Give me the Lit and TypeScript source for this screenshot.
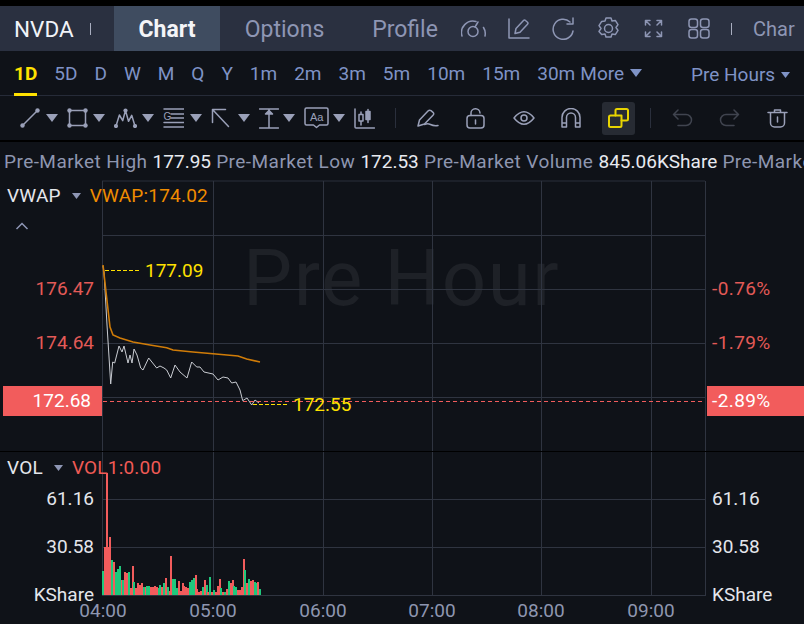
import { LitElement, css, html, svg } from "lit";
import { customElement } from "lit/decorators.js";

const PERIODS = ["5D", "D", "W", "M", "Q", "Y", "1m", "2m", "3m", "5m", "10m", "15m", "30m"];

const caret = (w = 12, h = 8) =>
  html`<svg class="caret" width=${w} height=${h} viewBox="0 0 12 8" preserveAspectRatio="none"><path d="M0 0h12L6 8z" fill="currentColor"/></svg>`;

const icon = (w: number, h: number, body: unknown, sw = 1.5) =>
  html`<svg class="icon" width=${w} height=${h} viewBox="0 0 ${w} ${h}" fill="none" stroke="currentColor" stroke-width=${sw} stroke-linejoin="round" stroke-linecap="round">${body}</svg>`;

const ICONS = {
  gauge: icon(25, 18, svg`<path d="M1 16A11.500 11.500 0 0 1 15 1.500M22.500 7.500a11.500 11.500 0 0 1 1.500 8.500"/><circle cx="12" cy="11.500" r="5"/><path d="m14 7 3-5"/>`),
  edit: icon(22, 21, svg`<path d="M1 1v19h20"/><path d="M7 15.500l1-5 7.500-8q1-1 2 0l2 1.700q1 1 0 2l-7.500 8z"/>`),
  refresh: icon(23, 23, svg`<path d="M18 5A10 10 0 1 0 21 14"/><path d="M21 1v6h-6"/>`),
  gear: icon(23, 23, svg`<path d="M9 1h5l1 3 3.300-.6 2.700 4.200-2 2.900 2 2.900-2.700 4.200-3.300-.6-1 3H9l-1-3-3.300.6L2 14.400l2-2.900-2-2.900 2.700-4.200L8 4z"/><circle cx="11.500" cy="11.500" r="4"/>`),
  expand: icon(19, 19, svg`<path d="M1.500 6V1.500H6M13 1.500h4.500V6M1.500 13v4.500H6M13 17.500h4.500V13M2 2l4 4M17 2l-4 4M2 17l4-4M17 17l-4-4"/>`),
  grid: icon(22, 21, svg`<rect x="1" y="1" width="8.500" height="8.500" rx="2.500"/><rect x="12.500" y="1" width="8.500" height="8.500" rx="2.500"/><rect x="1" y="11.500" width="8.500" height="8.500" rx="2.500"/><rect x="12.500" y="11.500" width="8.500" height="8.500" rx="2.500"/>`),

  line: icon(20, 20, svg`<path d="M2.500 17.500l15-15"/><g fill="currentColor" stroke="none"><circle cx="2.500" cy="17.500" r="2.200"/><circle cx="17.500" cy="2.500" r="2.200"/></g>`),
  rect: icon(21, 20, svg`<rect x="2.500" y="2.500" width="16" height="15"/><g fill="currentColor" stroke="none"><circle cx="2.500" cy="2.500" r="2.200"/><circle cx="18.500" cy="2.500" r="2.200"/><circle cx="2.500" cy="17.500" r="2.200"/><circle cx="18.500" cy="17.500" r="2.200"/></g>`),
  wave: icon(23, 20, svg`<path d="M2 18l3.400-11 3.300 5.700L11.500 2.500l3 10.800 3.200-6 3.300 10.700"/><g fill="currentColor" stroke="none"><circle cx="2" cy="18" r="2.100"/><circle cx="11.500" cy="2.500" r="2.100"/><circle cx="21" cy="18" r="2.100"/></g>`),
  fib: icon(21, 20, svg`<path d="M1 1h20M8 6h13M8 10h13M1 14.500h20M1 19h20"/><text x="0.500" y="12" font-size="10" fill="currentColor" stroke="none" font-family="Liberation Sans">G</text>`),
  arrow: icon(19, 20, svg`<path d="M1.500 1.500l16 17M1.500 1.500h13M1.500 1.500v13"/>`),
  measure: icon(20, 21, svg`<path d="M.5 1h19M.5 20h19M10 1v19"/><path d="M6.500 6 10 2.500 13.500 6z" fill="currentColor"/>`),
  note: icon(25, 22, svg`<path d="M2.500 1h20q1.500 0 1.500 1.500v14q0 1.500-1.500 1.500h-7l-3 2.500-3-2.500h-7Q1 18 1 16.500v-14Q1 1 2.500 1z"/><text x="6" y="14" font-size="11" fill="currentColor" stroke="none" font-family="Liberation Sans">Aa</text>`),
  candles: icon(21, 21, svg`<path d="M1 1v18q0 1 1 1h18.500M7 4v13M14 1.500v13"/><rect x="5" y="6.500" width="4" height="6.500" fill="#0f1218"/><rect x="12" y="3.500" width="4" height="8" fill="currentColor"/>`),

  pen: icon(22, 18, svg`<path d="M1 17l1.500-6L11 2q1.500-1.500 3-.3l2 1.600q1.500 1.500 0 3L7.500 15z"/><path d="M7.500 15.500c3-1.500 4-1 6 0s4 1.500 7.500 1"/>`),
  lock: icon(19, 21, svg`<rect x="1" y="7.500" width="17" height="12.500" rx="3"/><path d="M5 7.500V5.500a4.500 4.500 0 0 1 9-.5M9.500 12v4"/>`),
  eye: icon(22, 16, svg`<path d="M1 8Q11-4.500 21 8 11 20.500 1 8z"/><circle cx="11" cy="8" r="3"/>`),
  magnet: icon(20, 20, svg`<path d="M1 19V9.500a9 9 0 0 1 18 0V19h-4.500V9.500a4.500 4.500 0 0 0-9 0V19zM1 15h4.500M14.500 15H19"/>`),
  link: icon(21, 20, svg`<path d="M7.500 7.500v-5Q7.500 1 9 1h9.500Q20 1 20 2.500V11q0 1.500-1.500 1.500H13.500"/><path d="M13.500 7.500h-11Q1 7.500 1 9v8.500Q1 19 2.500 19H12q1.500 0 1.500-1.500z"/>`, 2),
  undo: icon(21, 18, svg`<path d="M6 1 1.500 5.500 6 10M1.500 5.500H14a5.500 5.500 0 0 1 0 11H6"/>`),
  redo: icon(21, 18, svg`<path d="m15 1 4.500 4.500L15 10M19.500 5.500H7a5.500 5.500 0 0 0 0 11h8"/>`),
  trash: icon(21, 19, svg`<path d="M1 3.500h19M7.500 3.500V1h6v2.500M3.500 3.500V14a4 4 0 0 0 4 4h6a4 4 0 0 0 4-4V3.500M10.500 8v5"/>`),
};

// drawing tools: slot width, icon, has a dropdown caret
const DRAW_TOOLS: [number, unknown, boolean][] = [
  [47, ICONS.line, true],
  [47, ICONS.rect, true],
  [49, ICONS.wave, true],
  [48, ICONS.fib, true],
  [48, ICONS.arrow, true],
  [45, ICONS.measure, true],
  [50, ICONS.note, true],
  [41, ICONS.candles, false],
];

// volume bars, green positive, red negative
const VOLUME = [
  24, -48, -122, -48, -58, 35, -33, 23, 26, 29, -15, 15, -23, -22, 23, -7, -29, 13, -7, -12, -10, -12, 8, -8, 9, 9, -8,
  -8, -9, -8, 7, 10, -8, 12, -17, 8, -4, -39, 16, 16, 7, -14, -4, -12, -9, -8, -7, 13, 15, 17, -20, -6, -3, -4, 8, -15,
  10, -3, 18, -3, 5, -3, -9, -16, 7, -3, 3, -6, 14, -12, -15, 9, 8, -5, -5, -8, -36, 25, -12, 16, -14, -15, 13, 12, -13,
  6,
];

const PRICE_LINE =
  "103,266 104,272 107,325 110.700,384 112.700,362 114.700,363 119,346 122,352 124,346 128,363 130,355 132,363 134,349 137,355 140.700,368 143,370 148.700,358 152.700,363 156.700,368 160,366 164,368 166.700,370 170.700,378 175,365 180,372 187,378 191.700,362 196.700,367 200,367 204,372 213,374 218,380 223,377 228,378 231.700,383 236,382 240,390 242.700,400.700 247,398 251.700,405 255,400 259,403";

const VWAP_LINE =
  "103,265 106.700,298 110,327 113,335 120,338 133,342 150,345 166.700,347.700 173,350 193,352 213,353.700 238,356 246.700,359 260,362";

@customElement("app-root")
export class AppRoot extends LitElement {
  static styles = css`
    :host {
      display: block;
      width: 804px;
      height: 624px;
      overflow: hidden;
      background: #0f1218;
      font-family: Roboto, "Noto Sans", sans-serif;
      color: #9aa3c0;
    }

    .strip {
      height: 6px;
      background: #000;
    }
    .top {
      display: flex;
      align-items: center;
      height: 45px;
      background: #2a3040;
      white-space: nowrap;
      overflow: hidden;
      color: #8e96b4;
    }
    .symbol {
      flex: none;
      box-sizing: border-box;
      width: 90px;
      padding-left: 14px;
      font-size: 22.5px;
      color: #f1f3f8;
    }
    .sep {
      width: 1px;
      height: 12px;
      background: #a9aec0;
      flex: none;
    }
    .tab {
      font-size: 23px;
      height: 100%;
      box-sizing: border-box;
      padding-top: 2px;
      display: flex;
      align-items: center;
      justify-content: center;
      flex: none;
    }
    .tab.on {
      width: 106px;
      margin-left: 23px;
      background: #3f4c60;
      color: #f4f5f8;
      font-weight: 700;
    }
    .tab.options {
      width: 129px;
    }
    .tab.profile {
      width: 88px;
      margin: 0 2px 0 12px;
    }
    .top-icons {
      display: flex;
      align-items: center;
    }
    .top-icons span {
      display: flex;
      justify-content: center;
      width: 45px;
    }
    .top .sep.last {
      margin-left: 10px;
    }
    .char {
      font-size: 20px;
      margin-left: 21px;
    }

    .periods {
      display: flex;
      align-items: center;
      height: 45px;
      border-bottom: 1px solid #262b38;
      color: #7f93c6;
      font-size: 19px;
      padding-left: 14px;
      position: relative;
      white-space: nowrap;
      box-sizing: border-box;
    }
    .periods span {
      margin-right: 17px;
    }
    .periods .active {
      color: #ffe100;
      font-weight: 700;
      position: relative;
    }
    .periods .active::after {
      content: "";
      position: absolute;
      left: 0;
      right: 0;
      bottom: -11px;
      height: 3px;
      background: #ffe100;
    }
    .periods .more {
      margin: 0 0 0 -12px;
      display: flex;
      align-items: center;
      gap: 6px;
    }
    .periods .hours {
      margin: 0;
      position: absolute;
      left: 691px;
      top: 12px;
      display: flex;
      align-items: center;
      gap: 6px;
    }

    .tools {
      display: flex;
      align-items: center;
      height: 46px;
      box-sizing: border-box;
      color: #9aa0b8;
      border-bottom: 2px solid #000;
      padding-left: 20px;
    }
    .slot {
      display: flex;
      align-items: center;
      flex: none;
      box-sizing: border-box;
    }
    .slot.drop {
      justify-content: space-between;
      padding-right: 9px;
    }
    .divider {
      width: 1px;
      height: 20px;
      background: #2a2f3c;
      flex: none;
    }
    .drawing-end {
      margin-right: 21px;
    }
    .linked {
      width: 33px;
      height: 33px;
      justify-content: center;
      border-radius: 3px;
      background: #272b33;
      color: #e8d400;
      margin-right: 15px;
    }
    .history {
      color: #40444f;
    }
    .history.first {
      margin-left: 21px;
    }

    .info {
      height: 38px;
      line-height: 40px;
      font-size: 19px;
      letter-spacing: 0.45px;
      padding-left: 4px;
      white-space: nowrap;
      overflow: hidden;
      color: #8e96b0;
    }
    .info b {
      font-weight: 400;
      letter-spacing: 0;
      color: #e8eaf0;
    }

    .chart {
      position: relative;
      height: 444px;
    }
    .plot {
      position: absolute;
      inset: 0;
      display: block;
    }
    .plot text {
      font-size: 19px;
    }
    .plot .wm {
      font-size: 78px;
      fill: #1e2127;
      letter-spacing: 1.5px;
    }
    .plot .pct {
      letter-spacing: 0.4px;
    }
    .legend {
      position: absolute;
      left: 7px;
      display: flex;
      align-items: center;
      font-size: 19px;
      letter-spacing: 0.2px;
      color: #e4e6ec;
      white-space: nowrap;
    }
    .legend.price {
      top: 4px;
    }
    .legend.volume {
      top: 276px;
    }
    .legend .caret {
      color: #8e96b4;
      margin: 0 9px 0 11px;
    }
    .legend .vwap {
      color: #f08c00;
    }
    .legend .vol {
      color: #f05a55;
    }
    .chev {
      position: absolute;
      left: 15px;
      top: 41px;
    }
  `;

  private chart() {
    const hs = [235, 289, 343, 397, 499, 547, 595];
    const vs = [102, 213, 323, 432, 541, 651, 705];
    return html`<svg class="plot" width="804" height="444" viewBox="0 180 804 444">
        <text class="wm" x="243" y="305">Pre Hour</text>
        <line x1="102" x2="705" y1="181" y2="181" stroke="#2a2f3a" />
        ${hs.map((h) => svg`<line x1="102" x2="705" y1=${h + 0.5} y2=${h + 0.5} stroke="#2f3440"/>`)}
        ${vs.map((v) => svg`<line x1=${v + 0.5} x2=${v + 0.5} y1="181" y2="596" stroke="#2f3440"/>`)}
        <line x1="0" x2="804" y1="451.500" y2="451.500" stroke="#000" />
        ${VOLUME.map((v, i) => {
          const h = Math.abs(v);
          return svg`<rect x=${Math.round(102 + i * 1.85)} y=${595 - h} width="2" height=${h} fill=${v > 0 ? "#1fc87c" : "#f25c5c"}/>`;
        })}
        <polyline points=${PRICE_LINE} fill="none" stroke="#c9ccd2" stroke-width="1" />
        <polyline points=${VWAP_LINE} fill="none" stroke="#d07c08" stroke-width="1.6" />
        <line x1="103" x2="705" y1="401.500" y2="401.500" stroke="#f25c5c" stroke-dasharray="4 3" />
        <line x1="105" x2="139" y1="270.500" y2="270.500" stroke="#ffe100" stroke-dasharray="4 2" />
        <line x1="253" x2="287" y1="404.500" y2="404.500" stroke="#ffe100" stroke-dasharray="4 2" />
        <text x="145" y="277" fill="#ffe100">177.09</text>
        <text x="293" y="411" fill="#ffe100">172.55</text>
        <text x="94" y="295" text-anchor="end" fill="#e35a57">176.47</text>
        <text x="94" y="349" text-anchor="end" fill="#e35a57">174.64</text>
        <text class="pct" x="712" y="295" fill="#e35a57">-0.76%</text>
        <text class="pct" x="712" y="349" fill="#e35a57">-1.79%</text>
        <rect x="3" y="386" width="99" height="30" fill="#f25c5c" />
        <rect x="707" y="386" width="97" height="30" fill="#f25c5c" />
        <text x="91" y="407" text-anchor="end" fill="#fff">172.68</text>
        <text class="pct" x="712" y="407" fill="#fff">-2.89%</text>
        <text x="94" y="505" text-anchor="end" fill="#e4e6ec">61.16</text>
        <text x="94" y="553" text-anchor="end" fill="#e4e6ec">30.58</text>
        <text x="94" y="601" text-anchor="end" fill="#e4e6ec">KShare</text>
        <text x="712" y="505" fill="#e4e6ec">61.16</text>
        <text x="712" y="553" fill="#e4e6ec">30.58</text>
        <text x="712" y="601" fill="#e4e6ec">KShare</text>
        ${["04:00", "05:00", "06:00", "07:00", "08:00", "09:00"].map(
          (t, i) =>
            svg`<text x=${[103, 213, 323, 432, 541, 651][i]} y="617" text-anchor="middle" fill="#8e96b0">${t}</text>`
        )}
      </svg>
      <div class="legend price"><span>VWAP</span>${caret(9, 6)}<span class="vwap">VWAP:174.02</span></div>
      <svg class="chev" width="14" height="10" viewBox="0 0 14 10">
        <path d="M1.500 8 7 2.500 12.500 8" fill="none" stroke="#8e96b4" stroke-width="1.500" />
      </svg>
      <div class="legend volume"><span>VOL</span>${caret(9, 6)}<span class="vol">VOL1:0.00</span></div>`;
  }

  render() {
    return html`
      <div class="strip"></div>
      <div class="top">
        <span class="symbol">NVDA</span><span class="sep"></span>
        <span class="tab on">Chart</span>
        <span class="tab options">Options</span>
        <span class="tab profile">Profile</span>
        <div class="top-icons">
          <span>${ICONS.gauge}</span>
          <span>${ICONS.edit}</span>
          <span>${ICONS.refresh}</span>
          <span>${ICONS.gear}</span>
          <span>${ICONS.expand}</span>
          <span>${ICONS.grid}</span>
        </div>
        <span class="sep last"></span>
        <span class="char">Char</span>
      </div>

      <div class="periods">
        <span class="active">1D</span>
        ${PERIODS.map((p) => html`<span>${p}</span>`)}
        <span class="more">More ${caret()}</span>
        <span class="hours">Pre Hours ${caret(9, 6)}</span>
      </div>

      <div class="tools">
        ${DRAW_TOOLS.map(
          ([w, ic, drop]) =>
            html`<div class="slot ${drop ? "drop" : ""}" style="width:${w}px">${ic}${drop ? caret() : ""}</div>`
        )}
        <span class="divider drawing-end"></span>
        <div class="slot" style="width:49px">${ICONS.pen}</div>
        <div class="slot" style="width:47px">${ICONS.lock}</div>
        <div class="slot" style="width:48px">${ICONS.eye}</div>
        <div class="slot" style="width:41px">${ICONS.magnet}</div>
        <div class="slot linked">${ICONS.link}</div>
        <span class="divider"></span>
        <div class="slot history first" style="width:47px">${ICONS.undo}</div>
        <div class="slot history" style="width:48px">${ICONS.redo}</div>
        <div class="slot">${ICONS.trash}</div>
      </div>

      <div class="info">
        Pre-Market High <b>177.95</b> Pre-Market Low <b>172.53</b> Pre-Market Volume <b>845.06KShare</b> Pre-Market
      </div>

      <div class="chart">${this.chart()}</div>
    `;
  }
}
